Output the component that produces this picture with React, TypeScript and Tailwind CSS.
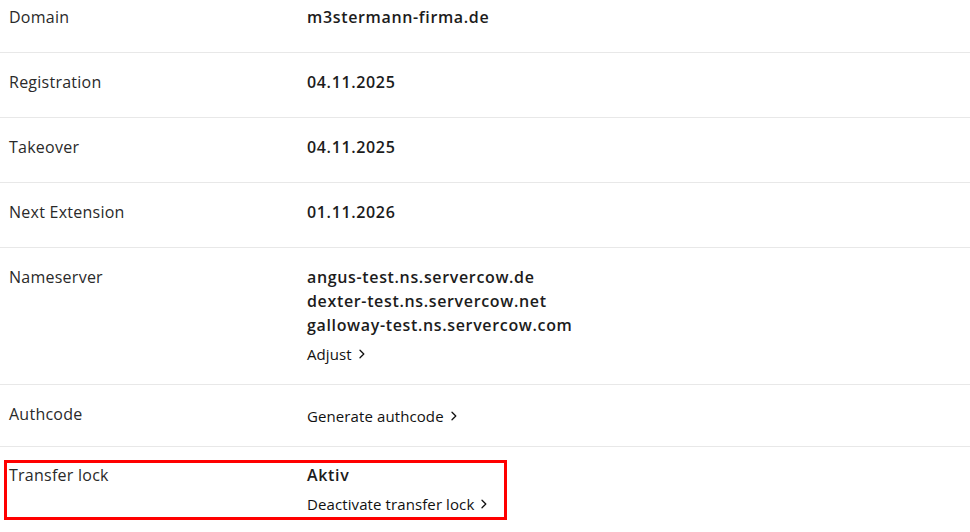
import { ReactNode } from "react"

function Chevron() {
  return (
    <svg className="ml-[7px] h-[10px] w-[6px]" viewBox="0 0 6 10" fill="none">
      <path d="M1 1.2l3.8 3.8-3.8 3.8" stroke="currentColor" strokeWidth="1.3" strokeLinecap="round" strokeLinejoin="round" />
    </svg>
  )
}

function LinkLine({ children, className = "" }: { children: ReactNode; className?: string }) {
  return (
    <a className={`flex items-center text-[15px] leading-5 tracking-[0.1px] text-[#111] ${className}`}>
      {children}
      <Chevron />
    </a>
  )
}

function Value({ children }: { children: ReactNode }) {
  return <span className="text-[16px] font-semibold leading-6 tracking-[0.65px] text-[#1c1c1c]">{children}</span>
}

function Row({
  label,
  children,
  first = false,
  className = "",
}: {
  label: string
  children: ReactNode
  first?: boolean
  className?: string
}) {
  return (
    <div
      className={`grid grid-cols-[298px_1fr] pl-[9px] ${first ? "pt-[5px]" : "border-t border-[#e8e8e8] pt-[17px]"} ${className}`}
    >
      <div className="text-[16px] leading-6 tracking-[0.25px] text-[#2a2a2a]">{label}</div>
      <div className="flex flex-col">{children}</div>
    </div>
  )
}

export default function App() {
  return (
    <div
      className="h-[532px] w-[970px] overflow-hidden bg-white"
      style={{ fontFamily: "'Open Sans', 'Liberation Sans', sans-serif" }}
    >
      <Row label="Domain" first className="pb-[23px]">
        <Value>m3stermann-firma.de</Value>
      </Row>
      <Row label="Registration" className="pb-[23px]">
        <Value>04.11.2025</Value>
      </Row>
      <Row label="Takeover" className="pb-[23px]">
        <Value>04.11.2025</Value>
      </Row>
      <Row label="Next Extension" className="pb-[23px]">
        <Value>01.11.2026</Value>
      </Row>
      <Row label="Nameserver" className="pb-[20px]">
        <Value>angus-test.ns.servercow.de</Value>
        <Value>dexter-test.ns.servercow.net</Value>
        <Value>galloway-test.ns.servercow.com</Value>
        <LinkLine className="mt-[7px]">Adjust</LinkLine>
      </Row>
      <Row label="Authcode" className="pb-[20px]">
        <LinkLine className="mt-[4px]">Generate authcode</LinkLine>
      </Row>
      <div className="border-t border-[#e8e8e8] pt-[13px]">
        <div className="ml-[4px] w-[503px] border-[3px] border-[#ff0000] pb-[3px] pl-[2px]">
          <div className="grid grid-cols-[298px_1fr]">
            <div className="text-[16px] leading-6 tracking-[0.25px] text-[#2a2a2a]">Transfer lock</div>
            <div className="flex flex-col">
              <Value>Aktiv</Value>
              <LinkLine className="mt-[7px]">Deactivate transfer lock</LinkLine>
            </div>
          </div>
        </div>
      </div>
    </div>
  )
}
